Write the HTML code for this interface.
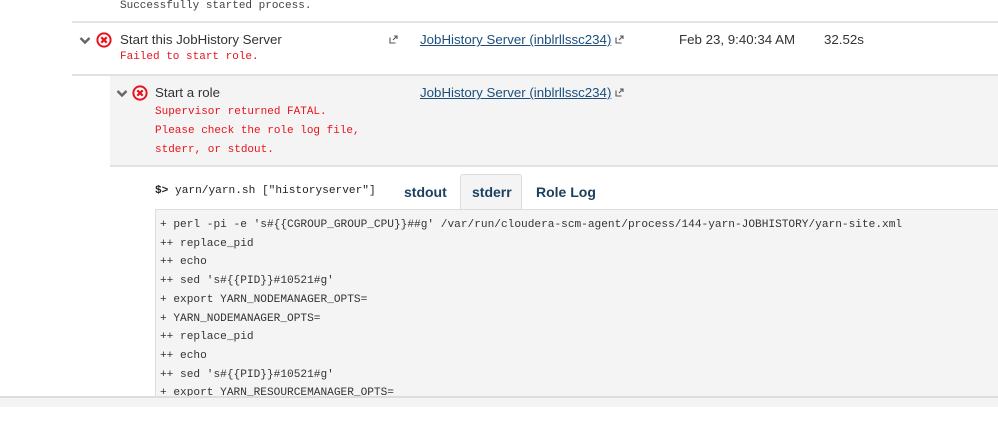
<!DOCTYPE html>
<html><head><style>
body{margin:0;width:998px;height:431px;background:#fff;position:relative;overflow:hidden;font-family:"Liberation Sans",Arial,sans-serif;}
.a{position:absolute;white-space:pre;}
.mono{font-family:"Liberation Mono",monospace;}
.red{color:#e8141e;font-size:11px;font-family:"Liberation Mono",monospace;}
.t{font-size:13.3px;color:#333;}
.lnk{font-size:13.3px;color:#1c4f7c;text-decoration:underline;}
.ext{position:absolute;width:9px;height:9px;}
.x{position:absolute;width:16px;height:16px;}
.tab{font-size:14px;font-weight:bold;color:#1b3f5e;}
.log{font-size:11.15px;color:#333;}
</style></head><body>
<div class="a mono" style="left:120px;top:-2px;font-size:11px;color:#444;line-height:16px">Successfully started process.</div>
<div class="a" style="left:72px;top:21px;width:926px;height:2px;background:#e4e4e4"></div>

<svg class="a" style="left:79px;top:36px" width="12" height="9" viewBox="0 0 12 9"><path d="M1.5 2 L6 6.5 L10.5 2" stroke="#666" stroke-width="2.4" fill="none"/></svg>
<svg class="x" style="left:96px;top:32px" viewBox="0 0 16 16"><circle cx="8" cy="8" r="6.6" fill="#fff" stroke="#e8141e" stroke-width="2"/><path d="M5.3 5.3 L10.7 10.7 M10.7 5.3 L5.3 10.7" stroke="#e8141e" stroke-width="2.2"/></svg>
<div class="a t" style="left:120px;top:32px">Start this JobHistory Server</div>
<div class="a red" style="left:120px;top:51px">Failed to start role.</div>
<svg class="ext" style="left:389px;top:35px" viewBox="0 0 9 9"><path d="M1 2.5 V8 H6.5 M4 5 L8 1 M5 1 H8 V4" stroke="#555" stroke-width="1.1" fill="none"/></svg>
<div class="a lnk" style="left:420px;top:32px">JobHistory Server (inblrllssc234)</div>
<svg class="ext" style="left:615px;top:35px" viewBox="0 0 9 9"><path d="M1 2.5 V8 H6.5 M4 5 L8 1 M5 1 H8 V4" stroke="#555" stroke-width="1.1" fill="none"/></svg>
<div class="a t" style="left:679px;top:32px">Feb 23, 9:40:34 AM</div>
<div class="a t" style="left:824px;top:32px">32.52s</div>

<div class="a" style="left:72px;top:74px;width:926px;height:2px;background:#e2e2e2"></div>
<div class="a" style="left:110px;top:76px;width:888px;height:89px;background:#f4f4f4"></div>
<div class="a" style="left:110px;top:165px;width:888px;height:2px;background:#e2e2e2"></div>

<svg class="a" style="left:116px;top:89px" width="12" height="9" viewBox="0 0 12 9"><path d="M1.5 2 L6 6.5 L10.5 2" stroke="#666" stroke-width="2.4" fill="none"/></svg>
<svg class="x" style="left:132px;top:85px" viewBox="0 0 16 16"><circle cx="8" cy="8" r="6.6" fill="#fff" stroke="#e8141e" stroke-width="2"/><path d="M5.3 5.3 L10.7 10.7 M10.7 5.3 L5.3 10.7" stroke="#e8141e" stroke-width="2.2"/></svg>
<div class="a t" style="left:155px;top:85px">Start a role</div>
<div class="a red" style="left:155px;top:103px;line-height:19px">Supervisor returned FATAL.
Please check the role log file,
stderr, or stdout.</div>
<div class="a lnk" style="left:420px;top:85px">JobHistory Server (inblrllssc234)</div>
<svg class="ext" style="left:615px;top:88px" viewBox="0 0 9 9"><path d="M1 2.5 V8 H6.5 M4 5 L8 1 M5 1 H8 V4" stroke="#555" stroke-width="1.1" fill="none"/></svg>

<div class="a mono" style="left:155px;top:185px;font-size:11.15px;color:#222;font-weight:bold;">$&gt;<span style="font-weight:normal"> yarn/yarn.sh ["historyserver"]</span></div>
<div class="a" style="left:460px;top:174px;width:60px;height:36px;background:#f4f4f4;border:1px solid #ddd;border-bottom:none;border-radius:3px 3px 0 0"></div>
<div class="a tab" style="left:404px;top:184px">stdout</div>
<div class="a tab" style="left:472px;top:184px">stderr</div>
<div class="a tab" style="left:536px;top:184px">Role Log</div>

<div class="a" style="left:155px;top:209px;width:843px;height:187px;background:#f4f4f4;border-top:1px solid #ddd;border-left:1px solid #ddd"></div>
<div class="a" style="left:155px;top:210px;width:843px;height:186px;overflow:hidden">
<div class="a mono log" style="left:5px;top:6px;line-height:18.7px">+ perl -pi -e 's#{{CGROUP_GROUP_CPU}}##g' /var/run/cloudera-scm-agent/process/144-yarn-JOBHISTORY/yarn-site.xml
++ replace_pid
++ echo
++ sed 's#{{PID}}#10521#g'
+ export YARN_NODEMANAGER_OPTS=
+ YARN_NODEMANAGER_OPTS=
++ replace_pid
++ echo
++ sed 's#{{PID}}#10521#g'
+ export YARN_RESOURCEMANAGER_OPTS=</div>
</div>
<div class="a" style="left:0;top:396px;width:998px;height:2px;background:#ddd"></div>
<div class="a" style="left:0;top:398px;width:998px;height:9px;background:#f4f4f4"></div>
</body></html>
